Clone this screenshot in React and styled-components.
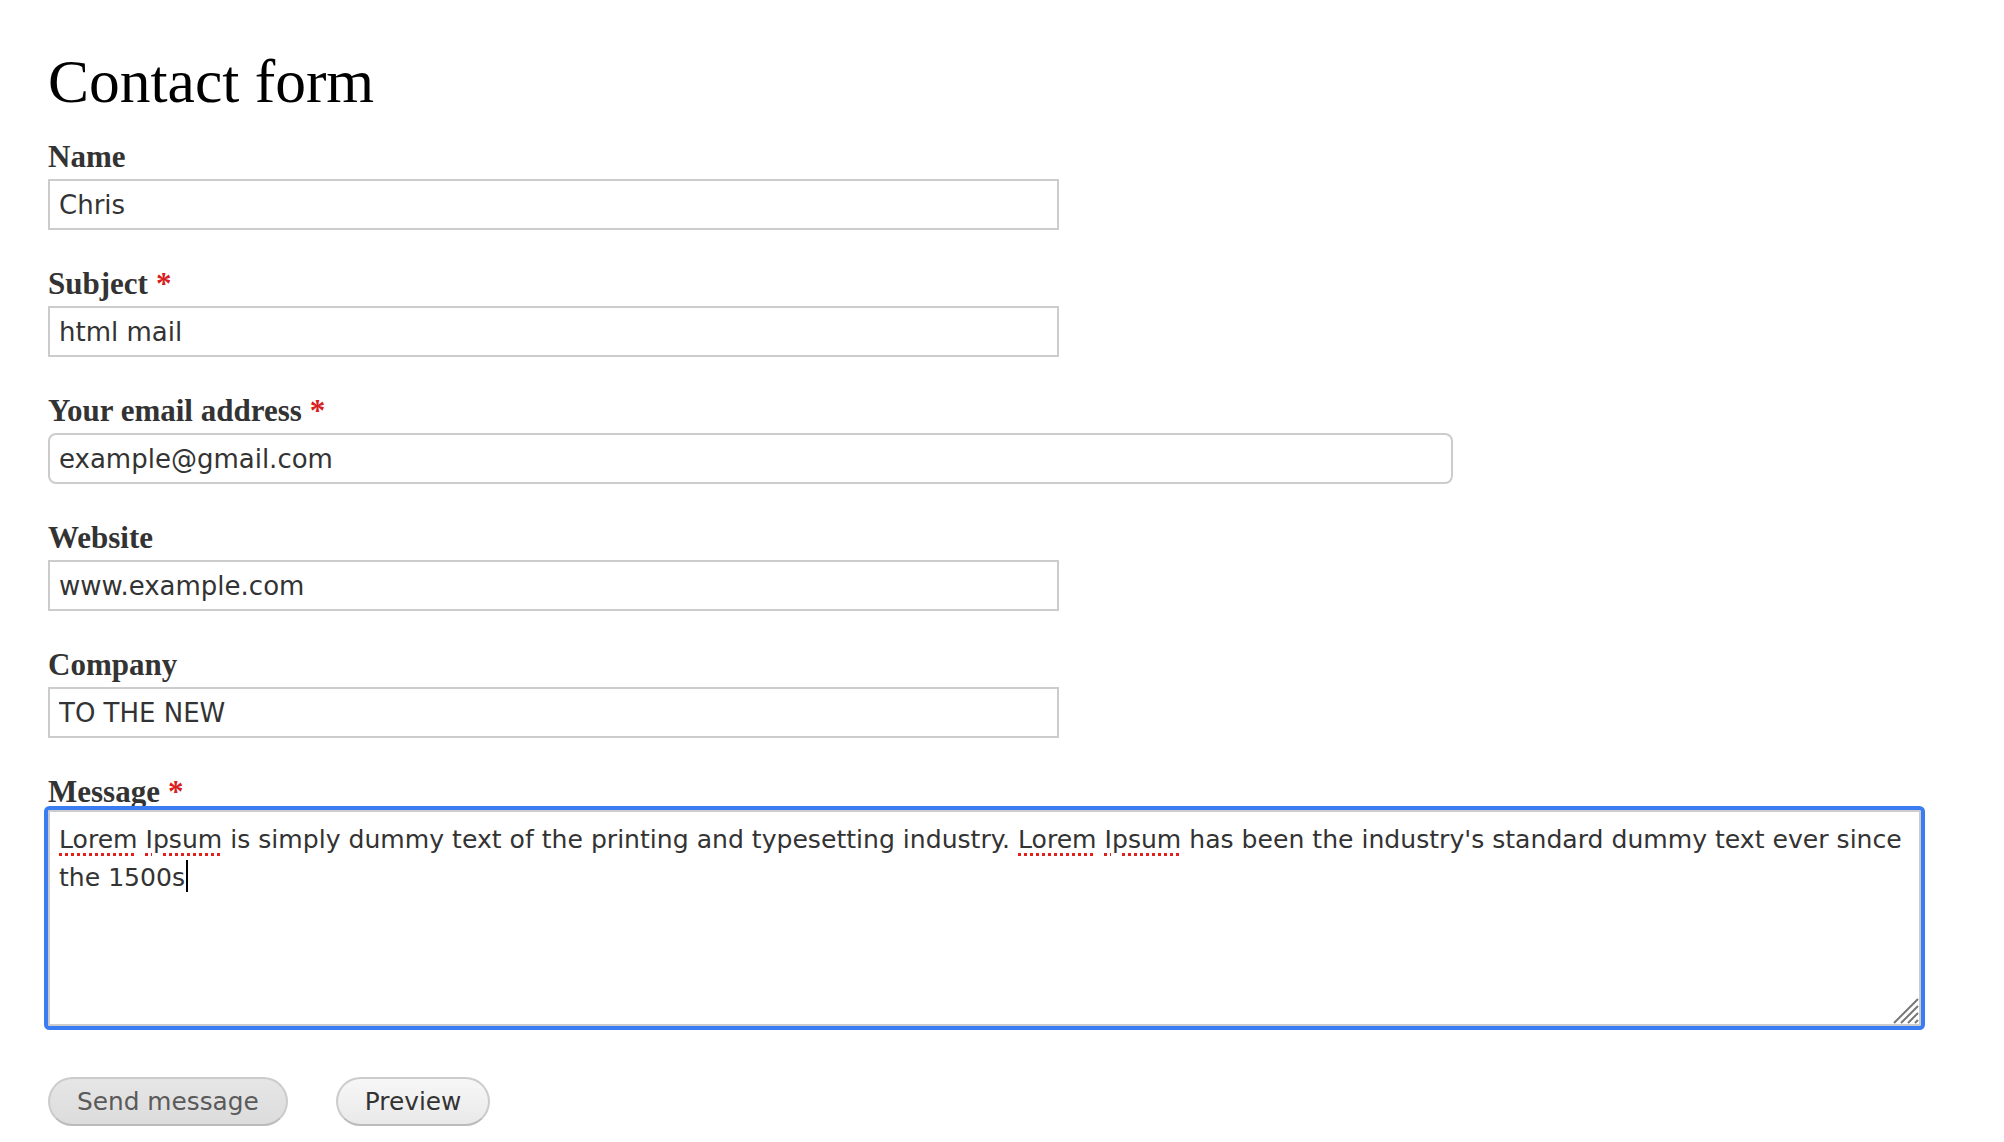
import React from 'react';
import styled, { createGlobalStyle } from 'styled-components';

const GlobalStyle = createGlobalStyle`
    body {
        margin: 0;
        background: #fff;
    }
`;

const fields = [
    { label: 'Name', value: 'Chris', width: 1011 },
    { label: 'Subject', value: 'html mail', width: 1011, required: true },
    { label: 'Your email address', value: 'example@gmail.com', width: 1405, required: true, rounded: true },
    { label: 'Website', value: 'www.example.com', width: 1011 },
    { label: 'Company', value: 'TO THE NEW', width: 1011 },
];

const App = () => {
    return (
        <>
            <GlobalStyle />
            <StyledPage>
                <StyledTitle>Contact form</StyledTitle>
                <form onSubmit={(e) => e.preventDefault()}>
                    {fields.map((f) => (
                        <StyledField key={f.label}>
                            <StyledLabel>
                                {f.label}
                                {f.required && <StyledRequired>*</StyledRequired>}
                            </StyledLabel>
                            <StyledInput type="text" defaultValue={f.value} $width={f.width} $rounded={f.rounded} />
                        </StyledField>
                    ))}
                    <StyledField>
                        <StyledLabel $tight>
                            Message<StyledRequired>*</StyledRequired>
                        </StyledLabel>
                        <StyledMessage>
                            <StyledTypo>Lorem</StyledTypo> <StyledTypo>Ipsum</StyledTypo> is simply dummy text of the printing and typesetting industry. <StyledTypo>Lorem</StyledTypo> <StyledTypo>Ipsum</StyledTypo> has been the industry's standard dummy text ever since the 1500s<StyledCaret />
                            <StyledGrip viewBox="0 0 26 26">
                                <path d="M1 25 L25 1 M8 25 L25 8 M15 25 L25 15 M22 25 L25 22" stroke="#777" strokeWidth="2" fill="none" />
                            </StyledGrip>
                        </StyledMessage>
                    </StyledField>
                    <StyledActions>
                        <StyledButton type="submit" $muted>Send message</StyledButton>
                        <StyledButton type="button">Preview</StyledButton>
                    </StyledActions>
                </form>
            </StyledPage>
        </>
    );
};

const StyledPage = styled.div`
    padding: 45px 48px 0;
    form {
        display: flex;
        flex-direction: column;
    }
`;

const StyledTitle = styled.h1`
    margin: 0 0 22px;
    font-family: "Liberation Serif", "Times New Roman", serif;
    font-weight: normal;
    font-size: 61.5px;
    line-height: 72px;
    color: #000;
`;

const StyledField = styled.div`
    display: flex;
    flex-direction: column;
    align-items: flex-start;
    margin-bottom: 36px;
`;

const StyledLabel = styled.label`
    display: block;
    margin-bottom: ${(p) => (p.$tight ? '0' : '4px')};
    font-family: "Liberation Serif", "Times New Roman", serif;
    font-weight: bold;
    font-size: 31px;
    line-height: 36px;
    color: #333;
`;

const StyledRequired = styled.span`
    margin-left: 8px;
    color: #d81e1e;
`;

const StyledInput = styled.input`
    box-sizing: border-box;
    width: ${(p) => p.$width}px;
    height: 51px;
    padding: 0 9px;
    border: 2px solid #ccc;
    border-radius: ${(p) => (p.$rounded ? '8px' : '0')};
    font-family: "DejaVu Sans", "Lucida Grande", sans-serif;
    font-size: 26px;
    color: #333;
    background: #fff;
    outline: none;
`;

const StyledMessage = styled.div`
    position: relative;
    box-sizing: border-box;
    width: 1873px;
    height: 216px;
    padding: 9px 3px 9px 9px;
    border: 2px solid #ccc;
    border-radius: 2px;
    box-shadow: 0 0 0 4px #3a7cf2;
    font-family: "DejaVu Sans", "Lucida Grande", sans-serif;
    font-size: 25.1px;
    line-height: 38px;
    color: #333;
`;

const StyledTypo = styled.span`
    text-decoration: underline dotted #e0201c;
    text-decoration-thickness: 3px;
    text-underline-offset: 5px;
`;

const StyledCaret = styled.span`
    display: inline-block;
    width: 2px;
    height: 32px;
    margin-left: 1px;
    vertical-align: -6px;
    background: #000;
`;

const StyledGrip = styled.svg`
    position: absolute;
    right: 0;
    bottom: 0;
    width: 26px;
    height: 26px;
`;

const StyledActions = styled.div`
    display: flex;
    gap: 48px;
    margin-top: 15px;
`;

const StyledButton = styled.button`
    height: 49px;
    padding: 0 27px;
    border: 2px solid #ccc;
    border-bottom-color: #bbb;
    border-radius: 25px;
    background: ${(p) => (p.$muted ? 'linear-gradient(#e6e6e6, #dcdcdc)' : 'linear-gradient(#f7f7f7, #e9e9e9)')};
    font-family: "DejaVu Sans", "Lucida Grande", sans-serif;
    font-size: 24.8px;
    color: ${(p) => (p.$muted ? '#5a5a5a' : '#333')};
    cursor: pointer;
`;

export default App;
